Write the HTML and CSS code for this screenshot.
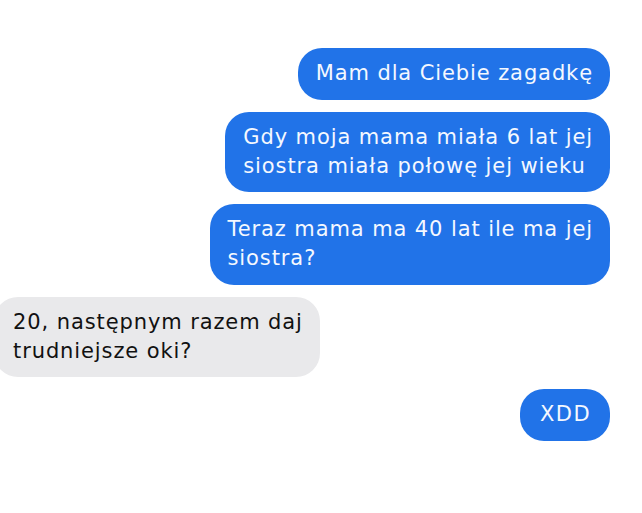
FILE: index.html
```html
<!DOCTYPE html>
<html lang="pl">
<head>
<meta charset="utf-8">
<title>Wiadomości</title>
<link rel="stylesheet" href="styles.css">
</head>
<body>
<main class="thread">
  <div class="bubble sent">Mam dla Ciebie zagadkę</div>
  <div class="bubble sent">Gdy moja mama miała 6 lat jej<br>siostra miała połowę jej wieku</div>
  <div class="bubble sent">Teraz mama ma 40 lat ile ma jej<br>siostra?</div>
  <div class="bubble received">20, następnym razem daj<br>trudniejsze oki?</div>
  <div class="bubble sent short">XDD</div>
</main>
</body>
</html>
```
FILE: styles.css
```css
html, body {
  margin: 0;
  padding: 0;
  background: #ffffff;
}
.thread {
  display: flex;
  flex-direction: column;
  align-items: flex-end;
  gap: 12px;
  padding: 48px 32px 0 0;
  font-family: "DejaVu Sans", "Liberation Sans", sans-serif;
  font-size: 21px;
  letter-spacing: 0.9px;
  line-height: 29px;
}
.bubble {
  padding: 11px 17px 11.5px 18px;
  border-radius: 24px;
  white-space: nowrap;
}
.sent {
  background: #2173e8;
  color: #f4f8ff;
}
.short {
  padding-left: 20px;
  padding-right: 19px;
  letter-spacing: 1.4px;
}
.received {
  align-self: flex-start;
  margin-left: -6px;
  padding-left: 19px;
  background: #e9e9eb;
  color: #111111;
}
```
